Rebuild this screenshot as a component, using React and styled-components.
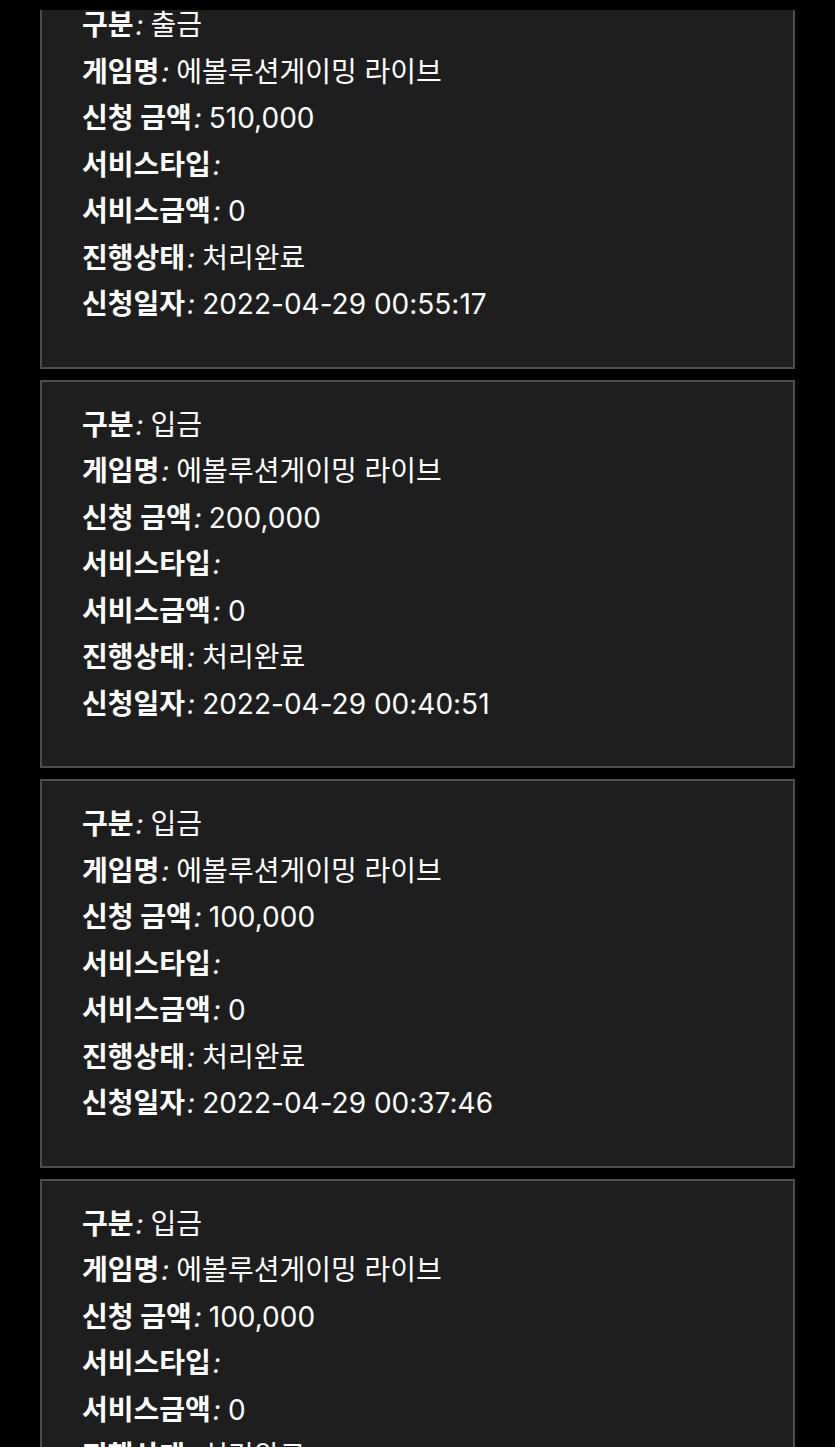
import React from "react";
import styled, { createGlobalStyle } from "styled-components";

const GlobalStyle = createGlobalStyle`
    html, body {
        margin: 0;
        padding: 0;
        background-color: #000000;
        overflow: hidden;
    }
    body {
        font-family: Inter, "Noto Sans CJK KR", "Noto Sans", sans-serif;
        color: #ffffff;
    }
`;

const TopBar = styled.div`
    position: fixed;
    top: 0;
    left: 0;
    right: 0;
    height: 10px;
    background-color: #000000;
    z-index: 10;
`;

// list is scrolled down a bit, so the first card is cut by the top bar
const HistoryList = styled.div`
    display: flex;
    flex-direction: column;
    gap: 11px;
    padding: 0 40px;
    margin-top: -20px;
`;

const Card = styled.div`
    background-color: #1e1e1e;
    border: 2px solid #4d4d4d;
    padding: 20px 40px 39px;
`;

const Row = styled.p`
    margin: 0;
    font-size: 28px;
    line-height: 46.5px;
    white-space: nowrap;
`;

const Label = styled.strong`
    font-weight: 700;
`;

const Colon = styled.em`
    font-style: italic;
    font-weight: 400;
    margin: 0 7px 0 2px;
`;

const history = [
    { kind: "출금", game: "에볼루션게이밍 라이브", amount: "510,000", date: "2022-04-29 00:55:17" },
    { kind: "입금", game: "에볼루션게이밍 라이브", amount: "200,000", date: "2022-04-29 00:40:51" },
    { kind: "입금", game: "에볼루션게이밍 라이브", amount: "100,000", date: "2022-04-29 00:37:46" },
    { kind: "입금", game: "에볼루션게이밍 라이브", amount: "100,000", date: "2022-04-29 00:21:08" },
];

const Field = ({ label, value }) => (
    <Row>
        <Label>{label}</Label>
        <Colon>:</Colon>
        {value}
    </Row>
);

const HistoryCard = ({ item }) => (
    <Card>
        <Field label="구분" value={item.kind} />
        <Field label="게임명" value={item.game} />
        <Field label="신청 금액" value={item.amount} />
        <Field label="서비스타입" value="" />
        <Field label="서비스금액" value="0" />
        <Field label="진행상태" value="처리완료" />
        <Field label="신청일자" value={item.date} />
    </Card>
);

const App = () => {
    return (
        <>
            <GlobalStyle />
            <TopBar />
            <HistoryList>
                {history.map((item, i) => (
                    <HistoryCard key={i} item={item} />
                ))}
            </HistoryList>
        </>
    );
};

export default App;
